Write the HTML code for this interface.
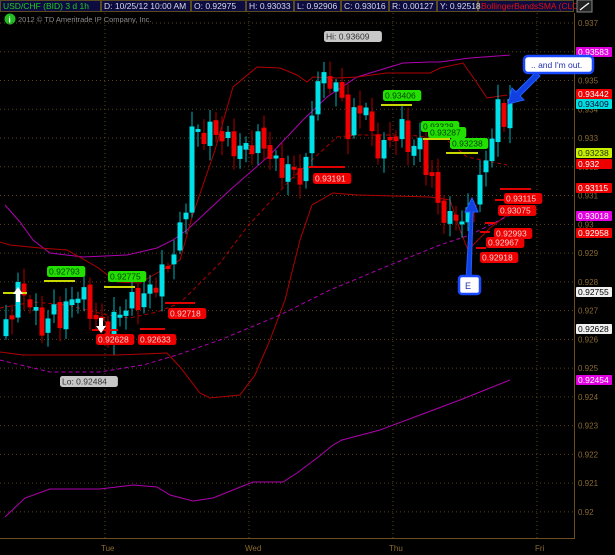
<!DOCTYPE html>
<html><head><meta charset="utf-8"><style>
html,body{margin:0;padding:0;background:#000;width:615px;height:555px;overflow:hidden}
svg{display:block}
text{font-family:"Liberation Sans",sans-serif}
</style></head><body>
<svg id="s" width="615" height="555" viewBox="0 0 615 555" xmlns="http://www.w3.org/2000/svg">
<rect width="615" height="555" fill="#000"/>
<rect x="0" y="0" width="574" height="12" fill="#0c0c40"/>
<g stroke="#5a4a20" stroke-width="1" fill="none">
<rect x="0.5" y="0.5" width="100" height="11"/><rect x="101.5" y="0.5" width="89" height="11"/>
<rect x="191.5" y="0.5" width="54" height="11"/><rect x="246.5" y="0.5" width="47" height="11"/>
<rect x="294.5" y="0.5" width="46" height="11"/><rect x="341.5" y="0.5" width="47" height="11"/>
<rect x="389.5" y="0.5" width="47" height="11"/><rect x="437.5" y="0.5" width="40" height="11"/>
<rect x="478.5" y="0.5" width="95" height="11"/>
</g>
<g font-size="8.5" fill="#d8d8e8">
<text x="3" y="9" fill="#22cc22">USD/CHF (BID) 3 d 1h</text>
<text x="104" y="9">D: 10/25/12 10:00 AM</text>
<text x="194" y="9">O: 0.92975</text>
<text x="249" y="9">H: 0.93033</text>
<text x="297" y="9">L: 0.92906</text>
<text x="344" y="9">C: 0.93016</text>
<text x="392" y="9">R: 0.00127</text>
<text x="440" y="9">Y: 0.92518</text>
<text x="481" y="9" fill="#e01010">BollingerBandsSMA (CLO</text>
</g>
<rect x="577" y="0" width="15" height="12" fill="#222" stroke="#888"/>
<path d="M580 10 L585 6 L589 3" stroke="#fff" stroke-width="1.2" fill="none"/>
<circle cx="10" cy="19" r="5.5" fill="#22bb22"/>
<text x="8.5" y="22.5" font-size="8" fill="#fff" font-weight="bold">i</text>
<text x="18" y="22" font-size="7.5" fill="#8a8a8a">2012 © TD Ameritrade IP Company, Inc.</text>
<g id="grid" stroke="#5a4418" stroke-width="1" stroke-dasharray="1,3"></g>
<line x1="574.5" y1="13" x2="574.5" y2="538" stroke="#6a5020"/>
<line x1="0" y1="538.5" x2="575" y2="538.5" stroke="#6a5020"/>
<g font-size="8" fill="#8a6a30">
<text x="101" y="551">Tue</text><text x="245" y="551">Wed</text><text x="389" y="551">Thu</text><text x="535" y="551">Fri</text>
</g>
<g id="axis" font-size="8" fill="#8a6a30"></g>
<g fill="none" stroke-width="1">
<polyline stroke="#b000b0" points="5,205 20,222 33,240 50,253 83,257 127,255 157,248 173,240 187,230 230,190 270,155 303,120 327,97 357,77 403,63 430,62 440,62 470,58 510,55"/>
<polyline stroke="#b00000" points="0,242 10,245 40,248 67,250 97,267 117,282 140,283 157,273 180,260 192,217 215,150 233,87 257,67 280,68 297,75 307,82 313,77 337,78 357,77 387,73 430,73 440,68 463,63 475,80 487,98 507,95"/>
<polyline stroke="#b00000" points="0,352 23,355 50,355 117,355 167,353 180,367 200,393 210,398 240,395 255,375 270,340 285,300 300,240 312,205 333,193 357,195 430,197 450,200 460,230 468,250 478,240 490,228 507,215"/>
<polyline stroke="#b00000" stroke-dasharray="4,3" points="0,308 33,302 67,305 107,315 130,318 157,312 180,303 220,263 247,227 290,180 337,137 357,135 410,135 447,140 467,157 507,165"/>
<polyline stroke="#b000b0" stroke-dasharray="4,3" points="0,360 50,372 100,372 143,365 177,355 220,340 280,315 330,290 390,265 440,245 470,235 510,215"/>
<polyline stroke="#b000b0" points="5,517 25,498 50,489 100,489 133,485 157,487 170,495 193,501 213,498 253,482 283,482 297,473 317,458 333,445 342,440 380,430 420,415 460,400 490,388 510,380"/>
</g>
<g id="candles"></g>
<g stroke-width="2">
<line x1="3" y1="293" x2="27" y2="293" stroke="#c8d800"/>
<line x1="44" y1="281" x2="75" y2="281" stroke="#c8d800"/>
<line x1="104" y1="287" x2="135" y2="287" stroke="#c8d800"/>
<line x1="381" y1="105" x2="412" y2="105" stroke="#c8d800"/>
<line x1="423" y1="139" x2="450" y2="139" stroke="#c8d800"/>
<line x1="446" y1="153" x2="478" y2="153" stroke="#c8d800"/>
<line x1="92" y1="330" x2="118" y2="330" stroke="#e00000"/>
<line x1="140" y1="329" x2="165" y2="329" stroke="#e00000"/>
<line x1="165" y1="303" x2="195" y2="303" stroke="#e00000"/>
<line x1="308" y1="167" x2="345" y2="167" stroke="#e00000"/>
<line x1="500" y1="189" x2="531" y2="189" stroke="#e00000"/>
<line x1="495" y1="200" x2="505" y2="200" stroke="#e00000"/>
<line x1="485" y1="223" x2="495" y2="223" stroke="#e00000"/>
<line x1="480" y1="232" x2="490" y2="232" stroke="#e00000"/>
<line x1="476" y1="248" x2="486" y2="248" stroke="#e00000"/>
</g>
<path d="M16 302 L16 294 L13 294 L18 287 L23 294 L20 294 L20 302Z" fill="#fff"/>
<path d="M99 318 L99 326 L96 326 L101 333 L106 326 L103 326 L103 318Z" fill="#fff"/>
<g id="labels" font-size="8.5"></g>
<path d="M536 72 L516 92 L512 88 L508 104 L524 100 L520 96 L540 76Z" fill="#1040e0" stroke="#2060ff" stroke-width="1"/>
<path d="M466 280 L470 212 L465 212 L472 198 L478 212 L473 212 L471 280Z" fill="#1040e0" stroke="#2060ff" stroke-width="1"/>
<rect x="524" y="56" width="69" height="17" rx="4" fill="#fff" stroke="#1848ff" stroke-width="2.5"/>
<text x="531" y="68" font-size="8.5" fill="#1f2fb0">.. and I'm out.</text>
<rect x="459" y="276" width="21" height="18" rx="3" fill="#fff" stroke="#1848ff" stroke-width="2.5"/>
<text x="465" y="289" font-size="9" fill="#1f2fb0">E</text>
</svg>
<script>
(function(){
var NS="http://www.w3.org/2000/svg";
function el(p,t,a,txt){var e=document.createElementNS(NS,t);for(var k in a)e.setAttribute(k,a[k]);if(txt)e.textContent=txt;document.getElementById(p).appendChild(e);return e;}
for(var i=0;i<=17;i++){var y=23+i*28.76;el('grid','line',{x1:0,x2:574,y1:y,y2:y});
 var p=(0.937-i*0.001).toFixed(3).replace(/0+$/,'');el('axis','text',{x:578,y:y+3},p);}
[105,249,393,537].forEach(function(x){el('grid','line',{x1:x,x2:x,y1:13,y2:538});});
var kp=[[5,330],[18,290],[30,300],[40,330],[55,310],[62,320],[70,300],[80,290],[95,320],[105,330],[115,320],[125,305],[140,300],[150,290],[165,270],[178,240],[185,215],[192,130],[200,135],[215,130],[225,140],[240,150],[250,145],[262,140],[275,165],[290,170],[300,175],[308,165],[312,110],[317,78],[325,82],[330,78],[337,90],[342,100],[348,130],[358,110],[365,100],[372,140],[380,150],[392,140],[400,125],[410,150],[418,140],[428,170],[440,210],[450,222],[458,210],[465,230],[470,205],[478,190],[485,165],[490,140],[495,118],[500,105],[505,122],[510,100]];
function f(x){for(var j=1;j<kp.length;j++)if(x<=kp[j][0]){var a=kp[j-1],b=kp[j];return a[1]+(b[1]-a[1])*(x-a[0])/(b[0]-a[0]);}return kp[kp.length-1][1];}
var prev=f(2);
for(var x=6;x<=510;x+=6){var c=f(x)+Math.sin(x*1.7)*11;var o=prev+Math.sin(x*0.9)*4;
 var up=c<o;var tp=Math.min(o,c),bt=Math.max(o,c);if(bt-tp<3)bt=tp+3;
 var hi=tp-3-Math.abs(Math.sin(x*2.3))*12,lo=bt+3+Math.abs(Math.cos(x*1.3))*12;
 el('candles','line',{x1:x,x2:x,y1:hi,y2:lo,stroke:up?'#00b0b8':'#b00000','stroke-width':1});
 el('candles','rect',{x:x-2.5,y:tp,width:5,height:bt-tp,fill:up?'#00e0e8':'#ee0000'});
 prev=c;}
function lab(x,y,t,bg,fg){var w=t.length*4.9+4;el('labels','rect',{x:x,y:y,width:w,height:11,rx:2.5,fill:bg});el('labels','text',{x:x+2,y:y+8.5,fill:fg},t);}
lab(324,31,'Hi: 0.93609','#c8c8c8','#333');
lab(383,90,'0.93406','#22e000','#084000');
lab(421,121,'0.93328','#22e000','#084000');
lab(428,127,'0.93287','#22e000','#084000');
lab(450,138,'0.93238','#22e000','#084000');
lab(313,173,'0.93191','#ee0000','#ffd0d0');
lab(47,266,'0.92793','#22e000','#084000');
lab(108,271,'0.92775','#22e000','#084000');
lab(168,308,'0.92718','#ee0000','#ffd0d0');
lab(96,334,'0.92628','#ee0000','#ffd0d0');
lab(138,334,'0.92633','#ee0000','#ffd0d0');
lab(60,376,'Lo: 0.92484','#c8c8c8','#333');
lab(504,193,'0.93115','#ee0000','#ffd0d0');
lab(498,205,'0.93075','#ee0000','#ffd0d0');
lab(494,228,'0.92993','#ee0000','#ffd0d0');
lab(486,237,'0.92967','#ee0000','#ffd0d0');
lab(480,252,'0.92918','#ee0000','#ffd0d0');
function tag(y,t,bg,fg){el('labels','rect',{x:576,y:y-5,width:36,height:10,rx:1,fill:bg});el('labels','text',{x:578,y:y+3,fill:fg},t);}
tag(52,'0.93583','#e000e0','#fff');
tag(94,'0.93442','#ee0000','#fff');
tag(104,'0.93409','#00e0e0','#003');
tag(153,'0.93238','#c8f000','#230');
tag(164,'0.932','#ee0000','#fff');
tag(188,'0.93115','#ee0000','#fff');
tag(216,'0.93018','#e000e0','#fff');
tag(233,'0.92958','#ee0000','#fff');
tag(292,'0.92755','#f0f0f0','#000');
tag(329,'0.92628','#f0f0f0','#000');
tag(380,'0.92454','#e000e0','#fff');
})();
</script>
</body></html>
